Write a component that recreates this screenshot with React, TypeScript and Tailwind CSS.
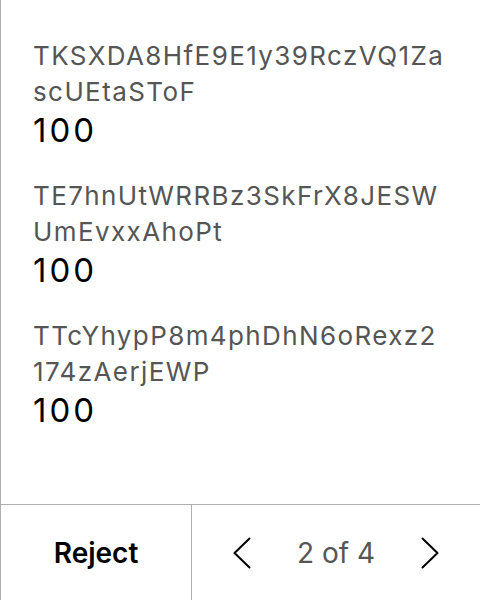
import React from "react";

const items = [
  { addr: "TKSXDA8HfE9E1y39RczVQ1ZascUEtaSToF", amount: "100" },
  { addr: "TE7hnUtWRRBz3SkFrX8JESWUmEvxxAhoPt", amount: "100" },
  { addr: "TTcYhypP8m4phDhN6oRexz2174zAerjEWP", amount: "100" },
];

function Chevron({ dir }: { dir: "left" | "right" }) {
  return (
    <svg width="18" height="32" viewBox="0 0 18 32" fill="none" className="shrink-0">
      <polyline
        points={dir === "left" ? "16.5,1.5 1.5,16 16.5,30.5" : "1.5,1.5 16.5,16 1.5,30.5"}
        stroke="#000"
        strokeWidth="2"
        strokeLinecap="round"
        strokeLinejoin="round"
      />
    </svg>
  );
}

export default function App() {
  return (
    <div
      className="w-[480px] h-[600px] flex flex-col bg-white border-l border-[#b0b0b0]"
      style={{ fontFamily: "Inter, 'Noto Sans', sans-serif" }}
    >
      <div className="flex-1 flex flex-col gap-[28px] pt-[38px] pl-[32px] pr-[33px]">
        {items.map((it, i) => (
          <div key={i} className="flex flex-col">
            <div className="text-[26px] leading-[36px] tracking-[1.4px] text-[#555555] break-all">{it.addr}</div>
            <div className="text-[33px] leading-[40px] tracking-[3px] text-black">{it.amount}</div>
          </div>
        ))}
      </div>
      <div className="h-[96px] flex border-t border-[#b0b0b0]">
        <div className="w-[191px] flex items-center justify-center border-r border-[#b0b0b0]">
          <span className="text-[28px] font-semibold text-black">Reject</span>
        </div>
        <div className="flex-1 flex items-center justify-center gap-[46px]">
          <Chevron dir="left" />
          <span className="text-[28px] text-[#555555]">2 of 4</span>
          <Chevron dir="right" />
        </div>
      </div>
    </div>
  );
}
